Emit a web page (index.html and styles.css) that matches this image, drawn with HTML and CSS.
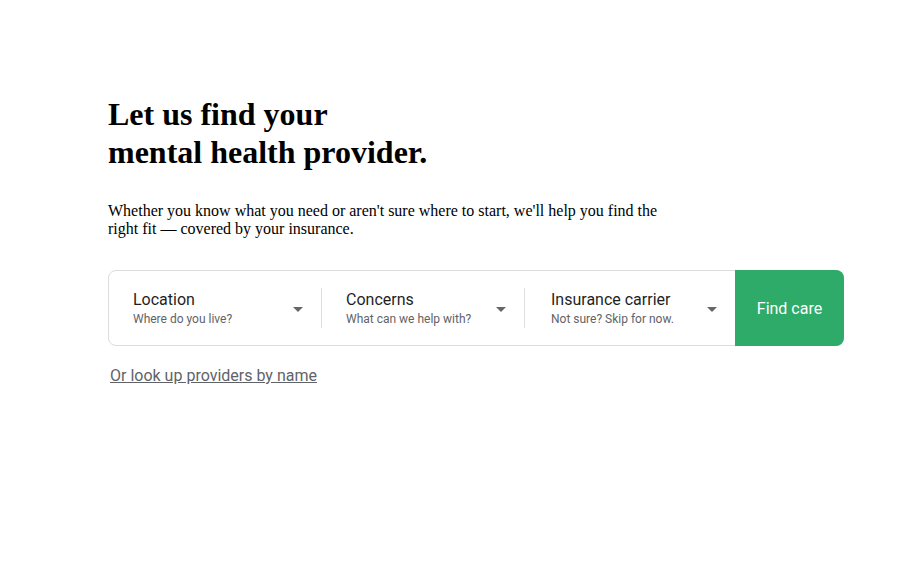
FILE: index.html
```html
<!DOCTYPE html>
<html lang="en">
<head>
    <meta charset="UTF-8">
    <meta name="viewport" content="width=device-width, initial-scale=1.0">
    <title>Find a mental health provider</title>
    <link rel="stylesheet" href="styles.css">
</head>
<body>
    <main class="hero">
        <h1>Let us find your<br>mental health provider.</h1>
        <p class="intro">Whether you know what you need or aren't sure where to start, we'll help you find the right fit — covered by your insurance.</p>

        <form class="search-bar">
            <div class="field field-location">
                <div class="field-text">
                    <span class="field-label">Location</span>
                    <span class="field-hint">Where do you live?</span>
                </div>
                <span class="caret"></span>
            </div>
            <div class="field field-concerns">
                <div class="field-text">
                    <span class="field-label">Concerns</span>
                    <span class="field-hint">What can we help with?</span>
                </div>
                <span class="caret"></span>
            </div>
            <div class="field field-insurance">
                <div class="field-text">
                    <span class="field-label">Insurance carrier</span>
                    <span class="field-hint">Not sure? Skip for now.</span>
                </div>
                <span class="caret"></span>
            </div>
            <button type="button" class="find-btn">Find care</button>
        </form>

        <a href="#" class="lookup-link">Or look up providers by name</a>
    </main>
</body>
</html>
```

FILE: styles.css
```css
body {
    margin: 0;
    background: #fff;
    color: #000;
    font-family: "Liberation Serif", "Times New Roman", serif;
}

.hero {
    padding: 95px 0 0 108px;
}

h1 {
    margin: 0;
    font-size: 32px;
    line-height: 38px;
    font-weight: bold;
}

.intro {
    margin: 31px 0 0;
    width: 580px;
    font-size: 16px;
    line-height: 18px;
}

.search-bar {
    display: flex;
    width: 736px;
    height: 76px;
    margin-top: 32px;
    box-sizing: border-box;
    border: 1px solid #dcdcdc;
    border-radius: 8px;
    font-family: Roboto, "Liberation Sans", Arial, sans-serif;
}

.field {
    display: flex;
    align-items: center;
    position: relative;
    box-sizing: border-box;
    padding-left: 24px;
}

.field + .field::before {
    content: "";
    position: absolute;
    left: 0;
    top: 17px;
    bottom: 17px;
    width: 1px;
    background: #dedede;
}

.field-location {
    width: 212px;
    padding-right: 18px;
}

.field-concerns {
    width: 203px;
    padding-left: 25px;
    padding-right: 18px;
}

.field-insurance {
    width: 211px;
    padding-left: 27px;
    padding-right: 18px;
}

.field-text {
    flex: 1;
    display: flex;
    flex-direction: column;
    margin-top: 1px;
}

.field-label {
    font-size: 16px;
    line-height: 20px;
    color: #1f1f1f;
}

.field-hint {
    font-size: 12px;
    line-height: 18px;
    color: #5f6368;
}

.caret {
    width: 0;
    height: 0;
    margin-top: 2px;
    border-left: 5px solid transparent;
    border-right: 5px solid transparent;
    border-top: 5px solid #666;
}

.find-btn {
    flex: 1;
    margin: -1px -1px -1px 0;
    border: none;
    border-radius: 0 8px 8px 0;
    background: #2eaa69;
    color: #fff;
    font-family: inherit;
    font-size: 16px;
    cursor: pointer;
}

.lookup-link {
    display: inline-block;
    margin: 20px 0 0 2px;
    font-family: Roboto, "Liberation Sans", Arial, sans-serif;
    font-size: 16px;
    line-height: 20px;
    color: #5f6368;
}
```
